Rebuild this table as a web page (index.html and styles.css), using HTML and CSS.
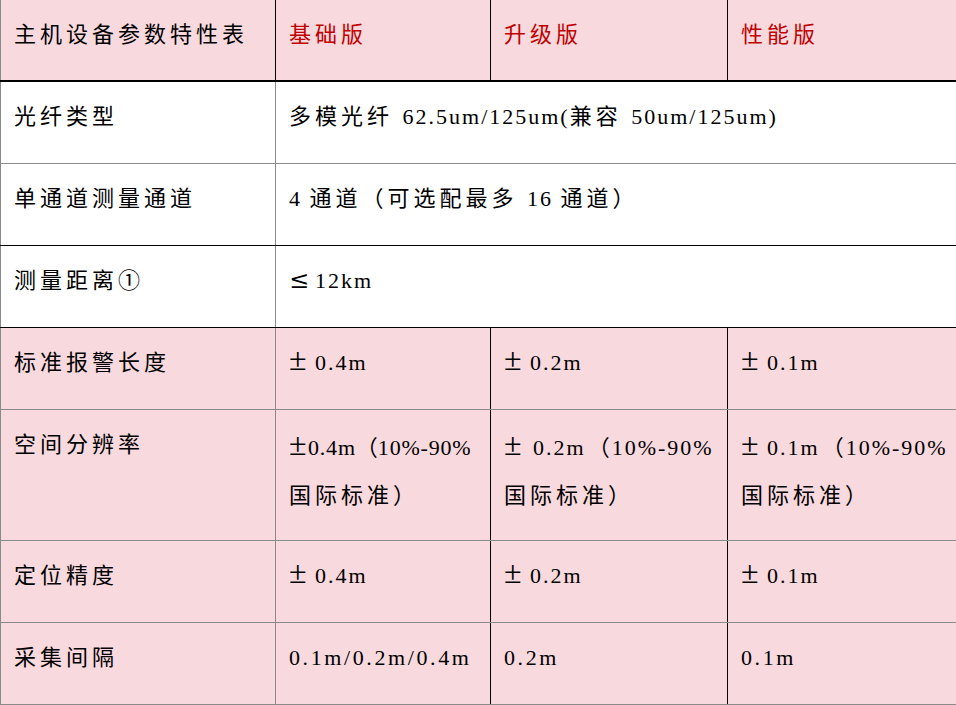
FILE: index.html
```html
<!DOCTYPE html>
<html lang="zh-CN">
<head>
<meta charset="utf-8">
<title>主机设备参数特性表</title>
<link rel="stylesheet" href="styles.css">
</head>
<body>
<table class="spec">
  <colgroup>
    <col class="c1"><col class="c2"><col class="c3"><col class="c4">
  </colgroup>
  <tr class="head pink">
    <td>主机设备参数特性表</td>
    <td class="red">基础版</td>
    <td class="red">升级版</td>
    <td class="red">性能版</td>
  </tr>
  <tr class="white grey-b">
    <td>光纤类型</td>
    <td colspan="3">多模光纤 <span class="n">62.5um/125um(</span>兼容 <span class="n">50um/125um)</span></td>
  </tr>
  <tr class="white black-b">
    <td>单通道测量通道</td>
    <td colspan="3"><span class="n">4 </span>通道（可选配最多 <span class="n">16 </span>通道）</td>
  </tr>
  <tr class="white black-b">
    <td>测量距离①</td>
    <td colspan="3"><span class="w le">≤</span><span class="n">12km</span></td>
  </tr>
  <tr class="pink grey-b">
    <td>标准报警长度</td>
    <td><span class="w">±</span><span class="n">0.4m</span></td>
    <td><span class="w">±</span><span class="n">0.2m</span></td>
    <td><span class="w">±</span><span class="n">0.1m</span></td>
  </tr>
  <tr class="pink grey-b tall">
    <td>空间分辨率</td>
    <td><span class="tight"><span class="w nw">±</span>0.4m<span class="cj">（</span>10%-90%</span><br>国际标准）</td>
    <td><span class="w wide">±</span><span class="n">0.2m</span><span class="cj gap">（</span><span class="n">10%-90%</span><br>国际标准）</td>
    <td><span class="w">±</span><span class="n">0.1m</span><span class="cj gap">（</span><span class="n">10%-90%</span><br>国际标准）</td>
  </tr>
  <tr class="pink grey-b">
    <td>定位精度</td>
    <td><span class="w">±</span><span class="n">0.4m</span></td>
    <td><span class="w">±</span><span class="n">0.2m</span></td>
    <td><span class="w">±</span><span class="n">0.1m</span></td>
  </tr>
  <tr class="pink grey-b">
    <td>采集间隔</td>
    <td><span class="n cond">0.1m/0.2m/0.4m</span></td>
    <td><span class="n cond">0.2m</span></td>
    <td><span class="n cond">0.1m</span></td>
  </tr>
</table>
</body>
</html>
```
FILE: styles.css
```css
html, body {
  margin: 0;
  padding: 0;
  background: #ffffff;
}

.spec {
  border-collapse: collapse;
  table-layout: fixed;
  width: 956px;
  font-family: "Liberation Serif", "Noto Sans CJK SC", serif;
  font-size: 22px;
  color: #000000;
}

.c1 { width: 275px; }
.c2 { width: 215px; }
.c3 { width: 237px; }
.c4 { width: 229px; }

.spec td {
  vertical-align: top;
  padding: 11px 0 0 13px;
  line-height: 48px;
  letter-spacing: 4px;
  white-space: nowrap;
  overflow: hidden;
  border-left: 1px solid #000000;
  border-right: 1px solid #000000;
  box-sizing: border-box;
}

.spec td:first-child {
  border-left: 1px solid #8a8a8a;
  border-right: 1px solid #8a8a8a;
}

.spec td:last-child {
  border-right: none;
}

.spec tr.head td:first-child {
  border-right-color: #000000;
}

.spec tr td { height: 82px; }
.spec tr.tall td { height: 131px; }

.spec tr.head td {
  height: 81px;
  border-bottom: 2px solid #000000;
}

.white td { background: #ffffff; }
.pink td { background: #f8d9de; }

.grey-b td { border-bottom: 1px solid #8a8a8a; }
.black-b td { border-bottom: 1px solid #000000; }

.white td:nth-child(2) {
  border-left-color: #8a8a8a;
}

.red { color: #c00000; }

.w {
  display: inline-block;
  width: 26px;
  letter-spacing: 0;
  text-align: left;
  font-family: "Liberation Serif", serif;
  font-size: 32px;
  line-height: 22px;
}

.w.le {
  font-family: "DejaVu Serif", serif;
  font-size: 24px;
}

.w.nw { width: 19px; }
.w.wide { width: 29px; }

.n {
  letter-spacing: 2px;
}

.tight {
  letter-spacing: 0.8px;
}

.cj {
  letter-spacing: 0;
  font-family: "Noto Sans CJK SC", sans-serif;
}

.cj.gap {
  margin: 0 2px 0 2px;
}

.cond {
  letter-spacing: 2.6px;
}
```
